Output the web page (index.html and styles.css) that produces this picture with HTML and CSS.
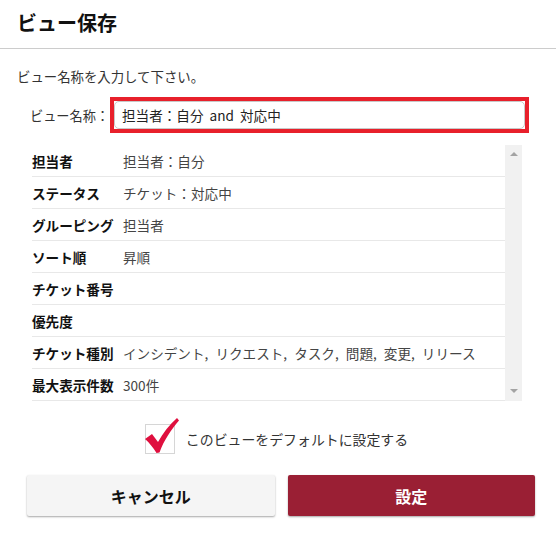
FILE: index.html
```html
<!DOCTYPE html>
<html lang="ja">
<head>
<meta charset="utf-8">
<title>ビュー保存</title>
<link rel="stylesheet" href="styles.css">
</head>
<body>
<div class="dialog">
  <div class="header"><h1 class="title">ビュー保存</h1></div>
  <p class="prompt">ビュー名称を入力して下さい。</p>
  <div class="name-row">
    <span class="name-label">ビュー名称：</span>
    <div class="highlight">
      <div class="name-input">担当者：自分 and 対応中</div>
    </div>
  </div>
  <div class="list-wrap">
    <div class="list">
      <div class="row"><span class="key">担当者</span><span class="val">担当者：自分</span></div>
      <div class="row"><span class="key">ステータス</span><span class="val">チケット：対応中</span></div>
      <div class="row"><span class="key">グルーピング</span><span class="val">担当者</span></div>
      <div class="row"><span class="key">ソート順</span><span class="val">昇順</span></div>
      <div class="row"><span class="key">チケット番号</span><span class="val"></span></div>
      <div class="row"><span class="key">優先度</span><span class="val"></span></div>
      <div class="row"><span class="key">チケット種別</span><span class="val">インシデント, リクエスト, タスク, 問題, 変更, リリース</span></div>
      <div class="row"><span class="key">最大表示件数</span><span class="val">300件</span></div>
    </div>
    <div class="scrollbar">
      <span class="arrow arrow-up"></span>
      <span class="arrow arrow-down"></span>
    </div>
  </div>
  <div class="default-row">
    <span class="checkbox">
      <svg class="check" width="40" height="40" viewBox="0 0 40 40" aria-hidden="true">
        <path d="M1 20 L8 15 L14 23 C19 14 25 6 33 -1 L35 1.5 C27 11 20 21 15.5 33.5 L12.5 34 C9 28.5 5.5 24 1 20 Z" fill="#df0f3e"/>
      </svg>
    </span>
    <span class="default-text">このビューをデフォルトに設定する</span>
  </div>
  <div class="buttons">
    <button class="btn btn-cancel">キャンセル</button>
    <button class="btn btn-ok">設定</button>
  </div>
</div>
</body>
</html>
```
FILE: styles.css
```css
* { box-sizing: border-box; }
html, body {
  margin: 0;
  padding: 0;
  background: #fff;
}
body {
  font-family: "Noto Sans CJK JP", "Noto Sans", sans-serif;
  color: #222;
  width: 556px;
  height: 539px;
  overflow: hidden;
}
.header {
  height: 49px;
  border-bottom: 1px solid #cccccc;
  padding-left: 17px;
  display: flex;
  align-items: center;
}
.title {
  margin: 0;
  font-size: 20px;
  font-weight: bold;
  color: #111;
  line-height: 1;
  padding-bottom: 3px;
}
.prompt {
  margin: 17px 0 0 17px;
  font-size: 13.4px;
  line-height: 20px;
  color: #333;
}
.name-row {
  display: flex;
  align-items: center;
  margin-top: 11px;
  padding-left: 30px;
}
.name-label {
  font-size: 13.2px;
  color: #333;
  width: 80px;
  flex-shrink: 0;
  white-space: nowrap;
}
.highlight {
  flex-shrink: 0;
  width: 419px;
  height: 36px;
  border: 4px solid #e8202b;
  padding: 0;
}
.name-input {
  height: 28px;
  border: 1px solid #c8c8c8;
  border-radius: 5px;
  padding-left: 7px;
  font-size: 13.6px;
  line-height: 26px;
  color: #222;
  white-space: nowrap;
  word-spacing: 3px;
}
.list-wrap {
  display: flex;
  margin: 12px 0 0 32px;
  width: 490px;
  height: 256px;
}
.list {
  flex: 1;
}
.row {
  display: flex;
  align-items: center;
  height: 32px;
  border-bottom: 1px solid #e8e8e8;
  font-size: 13.6px;
}
.key {
  width: 91px;
  flex-shrink: 0;
  font-weight: bold;
  color: #111;
  white-space: nowrap;
}
.val {
  color: #444;
  white-space: nowrap;
  word-spacing: 4px;
}
.scrollbar {
  width: 17px;
  background: #f1f1f1;
  display: flex;
  flex-direction: column;
  justify-content: space-between;
  align-items: center;
  padding: 7px 0 8px;
}
.arrow {
  width: 0;
  height: 0;
  border-left: 4px solid transparent;
  border-right: 4px solid transparent;
}
.arrow-up { border-bottom: 4px solid #a3a3a3; }
.arrow-down { border-top: 4px solid #a3a3a3; }
.default-row {
  display: flex;
  justify-content: center;
  align-items: center;
  margin-top: 23px;
  gap: 11px;
  padding-right: 3px;
}
.checkbox {
  position: relative;
  width: 30px;
  height: 30px;
  border: 1px solid #d6d6d6;
  background: #fff;
}
.check {
  position: absolute;
  left: -2px;
  top: -6px;
  overflow: visible;
}
.default-text {
  font-size: 13.9px;
  color: #333;
}
.buttons {
  display: flex;
  gap: 13px;
  margin: 21px 0 0 27px;
  width: 508px;
}
.btn {
  flex: 1;
  height: 41px;
  border: none;
  border-radius: 2px;
  font-family: "Noto Sans CJK JP", "Noto Sans", sans-serif;
  font-size: 16px;
  font-weight: bold;
  box-shadow: 0 1px 2px rgba(0, 0, 0, 0.35);
}
.btn-cancel {
  background: #f5f5f5;
  color: #111;
}
.btn-ok {
  background: #9a1f34;
  color: #fff;
}
```
